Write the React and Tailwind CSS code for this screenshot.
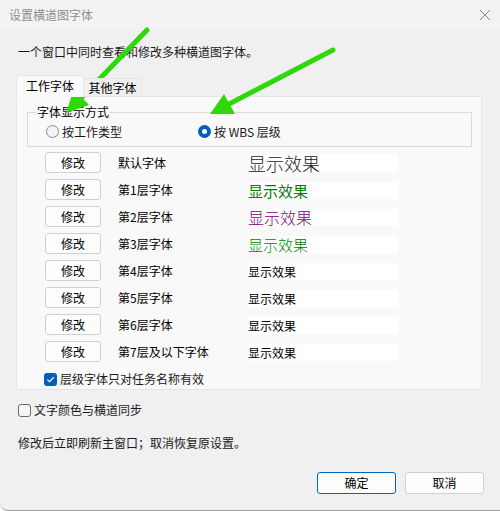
const rows = [
  { label: '默认字体', cls: 'text-[18px] font-light text-[#222]' },
  { label: '第1层字体', cls: 'text-[15px] text-[#008000]' },
  { label: '第2层字体', cls: 'text-[16px] font-light text-[#800080]' },
  { label: '第3层字体', cls: 'text-[15px] font-light text-[#008000]' },
  { label: '第4层字体', cls: 'text-[12px] text-black' },
  { label: '第5层字体', cls: 'text-[12px] text-black' },
  { label: '第6层字体', cls: 'text-[12px] text-black' },
  { label: '第7层及以下字体', cls: 'text-[12px] text-black' },
];

function Radio({ checked }) {
  return checked ? (
    <span className="w-[13px] h-[13px] rounded-full bg-[#005fb8] flex items-center justify-center shrink-0">
      <span className="w-[5px] h-[5px] rounded-full bg-white" />
    </span>
  ) : (
    <span className="w-[13px] h-[13px] rounded-full border border-[#8a8a8a] bg-[#f3f3f3] shrink-0" />
  );
}

function Check({ checked }) {
  return checked ? (
    <span className="w-[13px] h-[13px] rounded-[3px] bg-[#005fb8] flex items-center justify-center shrink-0">
      <svg width="9" height="9" viewBox="0 0 10 10" fill="none" stroke="white" strokeWidth="1.3">
        <polyline points="1.5 5.2 4 7.5 8.5 2.5" />
      </svg>
    </span>
  ) : (
    <span className="w-[13px] h-[13px] rounded-[3px] border border-[#6b6b6b] bg-[#f6f6f6] shrink-0" />
  );
}

export default function App() {
  return (
    <div
      className="relative w-[500px] h-[511px] bg-[#f0f0f0] flex flex-col text-[12px] leading-[16px] text-[#1a1a1a] border-b border-[#a0a0a0] rounded-bl-[8px] overflow-hidden"
      style={{ fontFamily: '"Noto Sans CJK SC", "Noto Sans", sans-serif' }}
    >
      {/* TITLE BAR */}
      <div className="h-[30px] shrink-0 bg-[#f3f3f3] flex items-center justify-between pl-[9px] pr-[10px]">
        <span className="text-[#8f8f8f]">设置横道图字体</span>
        <svg width="10" height="10" viewBox="0 0 10 10" stroke="#8a8a8a" strokeWidth="1">
          <line x1="0" y1="0" x2="10" y2="10" />
          <line x1="10" y1="0" x2="0" y2="10" />
        </svg>
      </div>

      {/* BODY */}
      <div className="flex flex-col px-[16px]">
        <p className="mt-[14px] pl-[2px]">一个窗口中同时查看和修改多种横道图字体。</p>

        {/* TABS */}
        <div className="mt-[15px] flex items-end h-[22px] -mb-px relative z-10">
          <div className="w-[68px] h-[22px] flex items-center justify-center border border-[#e5e5e5] border-b-[#f9f9f9] bg-[#f9f9f9] rounded-t-[3px] text-black">
            工作字体
          </div>
          <div className="w-[58px] h-[19px] flex items-center justify-center border border-[#e5e5e5] border-l-0 bg-[#f0f0f0] rounded-tr-[3px] text-black">
            其他字体
          </div>
        </div>

        {/* PANEL */}
        <div className="w-[466px] h-[294px] border border-[#e5e5e5] bg-[#f9f9f9] flex flex-col pl-[10px] pr-[9px] pt-[15px]">
          <div className="relative h-[35px] border border-[#dadada] flex items-center pt-[4px]">
            <span className="absolute -top-[9px] left-[8px] px-[1px] bg-[#f9f9f9] text-black">字体显示方式</span>
            <div className="flex items-center gap-[3px] pl-[18px] w-[170px]">
              <Radio />
              <span>按工作类型</span>
            </div>
            <div className="flex items-center gap-[3px]">
              <Radio checked />
              <span>按 WBS 层级</span>
            </div>
          </div>

          <div className="mt-[5px] ml-[18px] flex flex-col gap-[6px]">
            {rows.map((row) => (
              <div key={row.label} className="h-[21px] flex items-center">
                <button className="w-[56px] h-[21px] border border-[#d0d0d0] bg-[#fdfdfd] rounded-[3px] text-black">
                  修改
                </button>
                <span className="ml-[17px] w-[130px] text-black">{row.label}</span>
                <div className="w-[150px] h-[17px] bg-white mt-[2px] flex items-center">
                  <span className={`leading-[17px] whitespace-nowrap ${row.cls}`}>显示效果</span>
                </div>
              </div>
            ))}
          </div>

          <label className="mt-[9px] ml-[17px] flex items-center gap-[3px]">
            <Check checked />
            <span>层级字体只对任务名称有效</span>
          </label>
        </div>

        <label className="mt-[12px] pl-[2px] flex items-center gap-[3px]">
          <Check />
          <span>文字颜色与横道同步</span>
        </label>

        <p className="mt-[17px] pl-[2px]">修改后立即刷新主窗口；取消恢复原设置。</p>

        <div className="mt-[21px] flex justify-end gap-[9px]">
          <button className="w-[79px] h-[22px] border border-[#0067c0] bg-[#fdfdfd] rounded-[3px] text-black">确定</button>
          <button className="w-[79px] h-[22px] border border-[#d0d0d0] bg-[#fdfdfd] rounded-[3px] text-black">取消</button>
        </div>
      </div>

      {/* ANNOTATION ARROWS */}
      <svg className="absolute inset-0 pointer-events-none" width="500" height="511" viewBox="0 0 500 511">
        <g stroke="#2fd80b" strokeWidth="5" fill="#2fd80b" strokeLinecap="round">
          <line x1="147" y1="30" x2="82" y2="97" />
          <polygon points="66,113 89,105 74,89" stroke="none" />
          <line x1="333" y1="50" x2="229" y2="104" />
          <polygon points="210,114 235,114 224,94" stroke="none" />
        </g>
      </svg>
    </div>
  );
}
